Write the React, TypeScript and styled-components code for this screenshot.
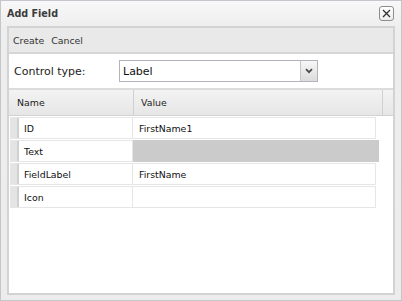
import styled, { createGlobalStyle } from 'styled-components';

const GlobalStyle = createGlobalStyle`
  html, body {
    margin: 0;
    padding: 0;
    background: #ffffff;
  }
  body {
    font-family: "DejaVu Sans", Verdana, sans-serif;
  }
`;

const StyledWindow = styled.div`
  box-sizing: border-box;
  width: 402px;
  height: 301px;
  border: 1px solid #c3c7cc;
  background: linear-gradient(#f8f8f8, #eeeeee 26px, #ececec);
  padding: 0 6px 5px 6px;
  display: flex;
  flex-direction: column;
`;

const StyledTitleBar = styled.div`
  height: 25px;
  display: flex;
  align-items: center;
  justify-content: space-between;
`;

const StyledTitle = styled.div`
  font-size: 9.6px;
  font-weight: bold;
  color: #3c3c3c;
`;

const StyledClose = styled.button`
  box-sizing: border-box;
  width: 15px;
  height: 15px;
  margin-right: 1px;
  padding: 0;
  border: 1px solid #8e8e8e;
  border-radius: 3px;
  background: linear-gradient(#ffffff, #ececec);
  display: flex;
  align-items: center;
  justify-content: center;
`;

const StyledPanel = styled.div`
  flex: 1;
  border: 2px solid #d3d3d3;
  background: #ffffff;
  display: flex;
  flex-direction: column;
`;

const StyledToolbar = styled.div`
  height: 24px;
  background: #e9e9e9;
  border-bottom: 2px solid #d6d6d6;
  padding-left: 4px;
  display: flex;
  align-items: center;
  gap: 7px;
`;

const StyledToolButton = styled.span`
  font-size: 9.4px;
  color: #333333;
`;

const StyledFormRow = styled.div`
  height: 34px;
  padding-left: 5px;
  display: flex;
  align-items: center;
`;

const StyledFormLabel = styled.label`
  width: 105px;
  font-size: 11px;
  color: #222222;
`;

const StyledSelect = styled.div`
  box-sizing: border-box;
  width: 199px;
  height: 22px;
  border: 1px solid #b3b3bb;
  display: flex;
  align-items: stretch;
`;

const StyledSelectValue = styled.div`
  flex: 1;
  padding-left: 3px;
  display: flex;
  align-items: center;
  font-size: 11px;
  color: #111111;
`;

const StyledSelectButton = styled.div`
  width: 16px;
  border-left: 1px solid #c6c6c6;
  background: linear-gradient(#f7f7f7, #dcdcdc);
  display: flex;
  align-items: center;
  justify-content: center;
`;

const StyledGridHeader = styled.div`
  height: 25px;
  border-top: 2px solid #dcdcdc;
  border-bottom: 1px solid #d2d2d2;
  background: linear-gradient(#f3f3f3, #e6e6e6);
  display: flex;
`;

const StyledHeaderCell = styled.div<{ $width: number; $pad: number }>`
  box-sizing: border-box;
  width: ${p => p.$width}px;
  padding-left: ${p => p.$pad}px;
  border-right: 1px solid #d0d0d0;
  display: flex;
  align-items: center;
  font-size: 9.4px;
  color: #222222;
`;

const StyledRows = styled.div`
  padding: 1px 0 0 1px;
  display: flex;
  flex-direction: column;
  gap: 1px;
`;

const StyledRow = styled.div`
  box-sizing: border-box;
  width: 366px;
  height: 22px;
  border: 1px solid #e6e6e6;
  display: flex;
`;

const StyledHandle = styled.div`
  width: 6px;
  background: #e4e4e4;
  border-right: 2px solid #d0d0d0;
`;

const StyledNameCell = styled.div`
  box-sizing: border-box;
  width: 114px;
  padding-left: 5px;
  border-right: 1px solid #e6e6e6;
  display: flex;
  align-items: center;
  font-size: 9.4px;
  color: #111111;
`;

const StyledValueCell = styled.div<{ $editing?: boolean }>`
  flex: 1;
  padding-left: 6px;
  display: flex;
  align-items: center;
  font-size: 9.4px;
  color: #111111;
  ${p => p.$editing && `
    background: #cbcbcb;
    margin: -1px -4px -1px 0;
  `}
`;

const fields = [
  { name: 'ID', value: 'FirstName1' },
  { name: 'Text', value: '', editing: true },
  { name: 'FieldLabel', value: 'FirstName' },
  { name: 'Icon', value: '' },
];

const App = () => {
  return (
    <>
      <GlobalStyle />
      <StyledWindow>
        <StyledTitleBar>
          <StyledTitle>Add Field</StyledTitle>
          <StyledClose>
            <svg width="9" height="9" viewBox="0 0 9 9">
              <path d="M1 1 L8 8 M8 1 L1 8" stroke="#333" strokeWidth="1.3" fill="none" />
            </svg>
          </StyledClose>
        </StyledTitleBar>
        <StyledPanel>
          <StyledToolbar>
            <StyledToolButton>Create</StyledToolButton>
            <StyledToolButton>Cancel</StyledToolButton>
          </StyledToolbar>
          <StyledFormRow>
            <StyledFormLabel>Control type:</StyledFormLabel>
            <StyledSelect>
              <StyledSelectValue>Label</StyledSelectValue>
              <StyledSelectButton>
                <svg width="8" height="6" viewBox="0 0 8 6">
                  <path d="M1 1.2 L4 4.2 L7 1.2" stroke="#4a4a4a" strokeWidth="1.7" fill="none" />
                </svg>
              </StyledSelectButton>
            </StyledSelect>
          </StyledFormRow>
          <StyledGridHeader>
            <StyledHeaderCell $width={125} $pad={8}>Name</StyledHeaderCell>
            <StyledHeaderCell $width={249} $pad={7}>Value</StyledHeaderCell>
          </StyledGridHeader>
          <StyledRows>
            {fields.map(f => (
              <StyledRow key={f.name}>
                <StyledHandle />
                <StyledNameCell>{f.name}</StyledNameCell>
                <StyledValueCell $editing={f.editing}>{f.value}</StyledValueCell>
              </StyledRow>
            ))}
          </StyledRows>
        </StyledPanel>
      </StyledWindow>
    </>
  );
};

export default App;
